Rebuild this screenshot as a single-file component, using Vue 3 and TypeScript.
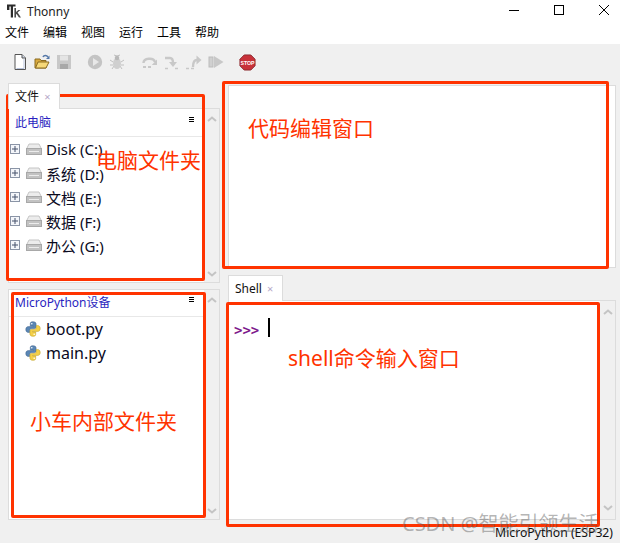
<script setup lang="ts">
const menus: string[] = ['文件', '编辑', '视图', '运行', '工具', '帮助']
const drives: string[] = ['Disk (C:)', '系统 (D:)', '文档 (E:)', '数据 (F:)', '办公 (G:)']
const files: string[] = ['boot.py', 'main.py']
</script>

<template>
  <div class="app">
    <header class="titlebar">
      <svg class="logo" width="14" height="14" viewBox="0 0 14 14">
        <path d="M0 .5H8.5V2.5H6V13.5H3.8V2.5H2.4V6H0Z" fill="#2b2b2b" />
        <path d="M7.4 4H9V8L11.4 6H13.4L10.6 8.6L14 13.5H12L9.6 9.9L9 10.5V13.5H7.4Z" fill="#4a4a4a" />
      </svg>
      <span class="app-name">Thonny</span>
      <div class="win-controls">
        <svg width="12" height="12" viewBox="0 0 12 12"><path d="M1 6.5H11" stroke="#000" /></svg>
        <svg width="12" height="12" viewBox="0 0 12 12"><rect x="1.5" y="1.5" width="9" height="9" fill="none" stroke="#000" /></svg>
        <svg width="12" height="12" viewBox="0 0 12 12"><path d="M1 1L11 11M11 1L1 11" stroke="#000" /></svg>
      </div>
    </header>

    <nav class="menubar">
      <span v-for="m in menus" :key="m">{{ m }}</span>
    </nav>

    <div class="toolbar">
      <svg class="ti" viewBox="0 0 16 16"><path d="M3 .5H10L13.5 4V15.5H3Z" fill="#fff" stroke="#555" /><path d="M10 .5V4H13.5" fill="#cfd8e8" stroke="#555" /><path d="M12 5V14.5H4.5" fill="none" stroke="#b9c4dc" /></svg>
      <svg class="ti" viewBox="0 0 16 16"><path d="M1 5H6L7 6.5H12V14H1Z" fill="#d9a93c" stroke="#8a6a20" /><path d="M1.5 14L4 8H15L12 14Z" fill="#f6d878" stroke="#8a6a20" /><path d="M9 3C10 1 12.5 1 14 3" fill="none" stroke="#5578a8" stroke-width="1.6" /><path d="M15.5 1.5V5H12Z" fill="#5578a8" /></svg>
      <svg class="ti gap" viewBox="0 0 16 16"><path d="M1 1H15V15H1Z" fill="#c8c8c8" /><rect x="4" y="1.5" width="8" height="5" fill="#e4e4e4" /><rect x="4" y="10" width="8" height="5" fill="#a8a8a8" /></svg>
      <svg class="ti" viewBox="0 0 16 16"><circle cx="8" cy="8" r="7.2" fill="#c4c4c4" /><path d="M6 4L12 8L6 12Z" fill="#e8e8e8" /></svg>
      <svg class="ti gap2" viewBox="0 0 16 16"><path d="M8 2L11 1M8 2L5 1M1 6L4 8M15 6L12 8M1 11H4M15 11H12M3 15L5 12M13 15L11 12" stroke="#c0c0c0" /><ellipse cx="8" cy="9.5" rx="4" ry="5.5" fill="#cfcfcf" /><circle cx="8" cy="4" r="2.3" fill="#b8b8b8" /></svg>
      <svg class="ti" viewBox="0 0 16 16"><path d="M1.5 9C1.5 4 11.5 3 13 8" fill="none" stroke="#c8c8c8" stroke-width="2.4" /><path d="M15 5.5V11H9.8Z" fill="#c8c8c8" /><path d="M1 13H4M6 13H9" stroke="#c8c8c8" stroke-width="2" /></svg>
      <svg class="ti" viewBox="0 0 16 16"><path d="M1 4H6C9 4 9 7 9 9" fill="none" stroke="#c8c8c8" stroke-width="2.4" /><path d="M5 8H13L9 13Z" fill="#c8c8c8" /><path d="M1 14.5H4M11 14.5H14" stroke="#c8c8c8" stroke-width="1.6" /></svg>
      <svg class="ti" viewBox="0 0 16 16"><path d="M7 13C7 8 8 6 11 6" fill="none" stroke="#c8c8c8" stroke-width="2.4" /><path d="M10.5 1.5L15.5 6L10.5 10.5Z" fill="#c8c8c8" /><path d="M0 14.5H3M5 14.5H8" stroke="#c8c8c8" stroke-width="1.6" /></svg>
      <svg class="ti gap" viewBox="0 0 16 16"><rect x="1" y="3" width="4" height="10" fill="#d0d0d0" stroke="#bcbcbc" /><path d="M6 2L15.5 8L6 14Z" fill="#c8c8c8" /></svg>
      <svg class="ti stop" viewBox="0 0 18 18">
        <path d="M5.5 1H12.5L17 5.5V12.5L12.5 17H5.5L1 12.5V5.5Z" fill="#c8323a" stroke="#8c2a30" />
        <text x="9" y="11.4" text-anchor="middle" class="stop-t">STOP</text>
      </svg>
    </div>

    <main class="workspace">
      <section class="left">
        <div class="tabs">
          <div class="tab files-tab">文件 <span class="x">×</span></div>
        </div>
        <div class="pane pc-pane">
          <div class="content">
            <div class="phead">
              <span>此电脑</span>
              <svg class="ham" width="7" height="6" viewBox="0 0 7 6"><path d="M1 .5H6M1 2.5H6M1 4.5H6" stroke="#000" /></svg>
            </div>
            <ul class="tree">
              <li v-for="d in drives" :key="d">
                <svg class="plus" width="10" height="10" viewBox="0 0 10 10"><rect x=".5" y=".5" width="9" height="9" fill="#f4f6fa" stroke="#8a94a6" /><path d="M2 5H8M5 2V8" stroke="#44506a" /></svg>
                <svg class="icon" width="16" height="12" viewBox="0 0 16 12">
                  <path d="M3 1H13L15.5 6H.5Z" fill="#ececec" stroke="#c4c4c4" />
                  <rect x=".5" y="5.5" width="15" height="6" fill="#c2c2c2" stroke="#a8a8a8" />
                  <path d="M3 8.5H13" stroke="#ececec" />
                </svg>
                <span>{{ d }}</span>
              </li>
            </ul>
          </div>
          <div class="sb">
            <svg class="chev" width="10" height="6" viewBox="0 0 10 6"><path d="M1 5L5 1.5L9 5" /></svg>
            <svg class="chev" width="10" height="6" viewBox="0 0 10 6"><path d="M1 1L5 4.5L9 1" /></svg>
          </div>
        </div>
        <div class="pane dev-pane">
          <div class="content">
            <div class="phead dev">
              <span>MicroPython设备</span>
              <svg class="ham" width="7" height="6" viewBox="0 0 7 6"><path d="M1 .5H6M1 2.5H6M1 4.5H6" stroke="#000" /></svg>
            </div>
            <ul class="tree devtree">
              <li v-for="f in files" :key="f">
                <svg class="icon" width="16" height="16" viewBox="0 0 16 16">
                  <path d="M8 .7C5 .7 5.3 2.2 5.3 3.4V5H8.4V5.6H3.4C1.8 5.6.8 6.6.8 8.5S1.8 11.4 3.2 11.4H4.7V9.6C4.7 8.4 5.7 7.5 6.9 7.5H9.6C10.6 7.5 11.1 6.8 11.1 6V3C11.1 1.6 10 .7 8 .7Z" fill="#5a86b4" stroke="#3c5f88" stroke-width=".5" />
                  <path d="M8 15.3C11 15.3 10.7 13.8 10.7 12.6V11H7.6V10.4H12.6C14.2 10.4 15.2 9.4 15.2 7.5S14.2 4.6 12.8 4.6H11.3V6.4C11.3 7.6 10.3 8.5 9.1 8.5H6.4C5.4 8.5 4.9 9.2 4.9 10V13C4.9 14.4 6 15.3 8 15.3Z" fill="#f4d048" stroke="#b89a20" stroke-width=".5" />
                  <circle cx="6.8" cy="2.8" r=".8" fill="#fff" />
                  <circle cx="9.2" cy="13.2" r=".8" fill="#fff" />
                </svg>
                <span>{{ f }}</span>
              </li>
            </ul>
          </div>
          <div class="sb">
            <svg class="chev" width="10" height="6" viewBox="0 0 10 6"><path d="M1 5L5 1.5L9 5" /></svg>
            <svg class="chev" width="10" height="6" viewBox="0 0 10 6"><path d="M1 1L5 4.5L9 1" /></svg>
          </div>
        </div>
      </section>

      <section class="right">
        <div class="editor"></div>
        <div class="tabs shell-tabs">
          <div class="tab shell-tab">Shell <span class="x">×</span></div>
        </div>
        <div class="pane shell-pane">
          <div class="content shell-content">
            <span class="prompt">&gt;&gt;&gt;</span><span class="cursor"></span>
          </div>
          <div class="sb shell-sb">
            <svg class="chev" width="10" height="6" viewBox="0 0 10 6"><path d="M1 5L5 1.5L9 5" /></svg>
            <svg class="chev" width="10" height="6" viewBox="0 0 10 6"><path d="M1 1L5 4.5L9 1" /></svg>
          </div>
        </div>
      </section>
    </main>

    <footer class="status">MicroPython (ESP32)</footer>

    <div class="mark box-a"></div>
    <div class="mark box-b"></div>
    <div class="mark box-c"></div>
    <div class="mark box-d"></div>
    <span class="note note-a">电脑文件夹</span>
    <span class="note note-b">代码编辑窗口</span>
    <span class="note note-c">shell命令输入窗口</span>
    <span class="note note-d">小车内部文件夹</span>
    <span class="watermark">CSDN @智能引领生活.</span>
  </div>
</template>

<style>
html, body { margin: 0; background: #f0f0f0; }
</style>

<style scoped>
.app {
  position: relative;
  width: 620px;
  height: 543px;
  overflow: hidden;
  display: flex;
  flex-direction: column;
  background: #f0f0f0;
  color: #000;
  font-family: "Noto Sans", "Noto Sans CJK SC", sans-serif;
}
.titlebar {
  height: 22px;
  display: flex;
  align-items: center;
  background: #fff;
  padding-left: 7px;
}
.logo { margin-right: 6px; }
.app-name { font-size: 12px; color: #222; }
.win-controls {
  margin-left: auto;
  margin-right: 10px;
  display: flex;
  gap: 33px;
  transform: translateY(-1px);
}
.menubar {
  height: 22px;
  display: flex;
  gap: 14px;
  align-items: center;
  padding-left: 5px;
  background: #fff;
  font-size: 12px;
  line-height: 16px;
}
.toolbar {
  height: 39px;
  box-sizing: border-box;
  display: flex;
  align-items: center;
  gap: 6px;
  padding: 0 0 3px 12px;
}
.ti { width: 16px; height: 16px; flex: none; }
.ti.gap { margin-right: 9px; }
.ti.gap2 { margin-right: 11px; }
.ti.stop { width: 17px; height: 17px; }
.stop-t { font: bold 5.5px "Liberation Sans", sans-serif; fill: #fff; }

.workspace {
  flex: 1;
  min-height: 0;
  display: flex;
  gap: 8px;
  padding-left: 8px;
  padding-right: 4px;
}
.left { width: 212px; display: flex; flex-direction: column; }
.right { flex: 1; display: flex; flex-direction: column; padding-top: 2px; }
.tabs { height: 25px; display: flex; flex: none; }
.tab {
  box-sizing: border-box;
  height: 26px;
  background: #fff;
  border: 1px solid #dcdcdc;
  border-bottom: 0;
  font-size: 12px;
  line-height: 25px;
  position: relative;
  z-index: 1;
  color: #111;
}
.files-tab { width: 52px; padding-left: 6px; }
.shell-tab { width: 55px; padding-left: 6px; }
.x { color: #b5a8c8; font-size: 11px; margin-left: 2px; }
.pane {
  box-sizing: border-box;
  display: flex;
  border: 1px solid #dcdcdc;
  background: #f0f0f0;
}
.pc-pane { height: 175px; margin-bottom: 6px; }
.dev-pane { flex: 1; min-height: 0; }
.content { flex: 1; background: #fff; min-width: 0; }
.sb {
  width: 15px;
  flex: none;
  display: flex;
  flex-direction: column;
  justify-content: space-between;
  align-items: center;
  padding: 7px 0 5px;
  box-sizing: border-box;
}
.chev { fill: none; stroke: #c4c4c4; stroke-width: 2; }
.phead {
  height: 28px;
  box-sizing: border-box;
  border-bottom: 1px solid #e8e8e8;
  display: flex;
  justify-content: space-between;
  align-items: center;
  padding: 0 9px 2px 6px;
  font-size: 12px;
  color: #2a1fc0;
}
.phead.dev { height: 27px; padding-bottom: 3px; }
.ham { transform: translateY(-2px); }
.tree {
  list-style: none;
  margin: 0;
  padding: 0 0 0 1px;
  font-size: 15px;
  color: #0a0a1e;
}
.tree li {
  height: 24px;
  display: flex;
  align-items: center;
}
.plus { margin-right: 6px; }
.icon { margin-right: 4px; }
.devtree { padding-left: 16px; font-size: 16px; }
.devtree .icon { margin-right: 5px; }
.editor {
  box-sizing: border-box;
  height: 183px;
  background: #fff;
  border: 1px solid #dcdcdc;
  margin-bottom: 7px;
  flex: none;
}
.shell-pane { flex: 1; min-height: 0; }
.shell-content {
  position: relative;
  display: flex;
  align-items: flex-start;
  padding: 19px 0 0 5px;
}
.prompt {
  font: bold 14px/20px "DejaVu Sans Mono", monospace;
  color: #7e1a8c;
}
.cursor {
  width: 2px;
  height: 19px;
  background: #000;
  margin-left: 9px;
  transform: translateY(-2px);
}
.shell-sb { padding: 8px 0; }
.status {
  height: 23px;
  flex: none;
  text-align: right;
  padding-right: 7px;
  font-size: 12.2px;
  line-height: 26px;
  color: #111;
}
.mark {
  position: absolute;
  box-sizing: border-box;
  border: 3px solid #ff3300;
  border-radius: 2px;
}
.box-a { left: 6px; top: 94px; width: 199px; height: 187px; }
.box-b { left: 11px; top: 292px; width: 195px; height: 226px; }
.box-c { left: 222px; top: 81px; width: 387px; height: 188px; }
.box-d { left: 226px; top: 302px; width: 374px; height: 225px; }
.note {
  position: absolute;
  font-size: 21px;
  line-height: 26px;
  color: #ff3300;
  white-space: nowrap;
}
.note-a { left: 96px; top: 147px; }
.note-b { left: 248px; top: 115px; }
.note-c { left: 288px; top: 345px; }
.note-d { left: 30px; top: 408px; }
.watermark {
  position: absolute;
  left: 402px;
  top: 511px;
  font-size: 20px;
  line-height: 26px;
  color: rgba(90, 90, 90, 0.45);
  white-space: nowrap;
}
</style>
